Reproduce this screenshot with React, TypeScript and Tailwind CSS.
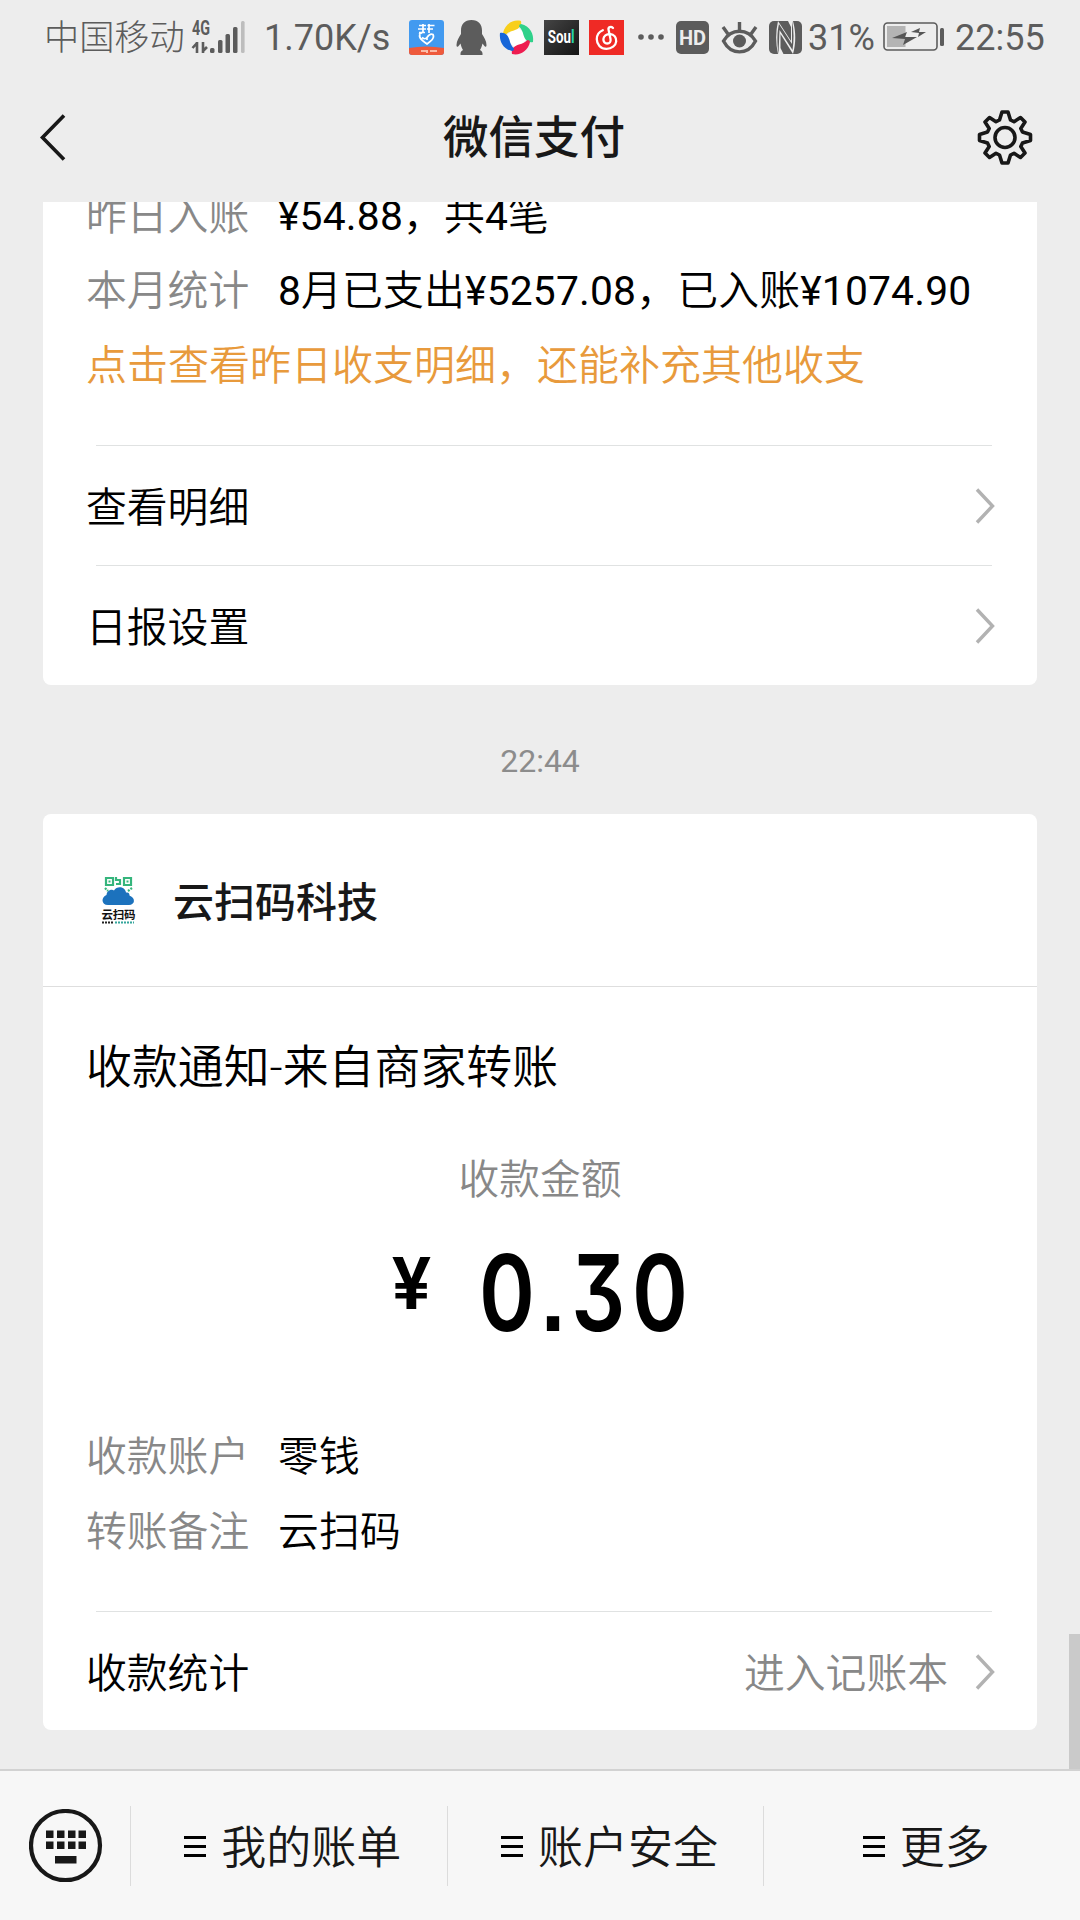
import type { ReactNode } from "react"

interface DetailRowProps {
  label: string
  value: string
}

function DetailRow({ label, value }: DetailRowProps) {
  // amounts are set a little heavier than the surrounding text
  const parts = value.split(/([¥\d.]+)/).filter(Boolean)

  return (
    <div className="flex h-[75px] items-center whitespace-nowrap text-[40.8px] leading-[60px]">
      <span className="w-[192px] text-[#888888]">{label}</span>
      <span className="tracking-[0.18px]">
        {parts.map((part, i) => (
          <span key={i} className={/\d/.test(part) ? "font-normal" : ""}>{part}</span>
        ))}
      </span>
    </div>
  )
}

function Chevron() {
  return (
    <svg className="h-[38px] w-[22px]" viewBox="0 0 22 38" fill="none" stroke="#b2b2b2" strokeWidth="3.4">
      <path d="M3 2.5 18.5 19 3 35.5" />
    </svg>
  )
}

interface LinkRowProps {
  label: string
  extra?: string
}

function LinkRow({ label, extra }: LinkRowProps) {
  return (
    <div className="mr-[41px] ml-[43px]">
      <div className="mr-[4px] ml-[10px] h-px bg-[#e0e2e2]" />
      <div className="flex h-[119px] items-center text-[40.8px] leading-[60px]">
        <span className="flex-1 pt-[4px]">{label}</span>
        {extra && <span className="mr-[26px] pt-[4px] text-[#888888]">{extra}</span>}
        <Chevron />
      </div>
    </div>
  )
}

function SignalIcon() {
  return (
    <svg className="h-[34px] w-[53px] overflow-visible" viewBox="0 0 53 34" fill="#5c5c5c">
      <text x="0" y="15" fontSize="20" fontWeight="700" fontFamily="Roboto" textLength="18" lengthAdjust="spacingAndGlyphs">4G</text>
      <path d="M5 22v11M0.500 28l4.500-5M11 22v11M11 31l4-4" stroke="#5c5c5c" strokeWidth="2.6" />
      <rect x="18" y="28" width="4.500" height="5" rx="1.500" />
      <rect x="26" y="20" width="4.500" height="13" rx="1.500" />
      <rect x="33.500" y="14" width="4.500" height="19" rx="1.500" />
      <rect x="41" y="7" width="4.500" height="26" rx="1.500" />
      <rect x="49" y="1" width="3.600" height="32" rx="1.500" fill="#bdbdbd" />
    </svg>
  )
}

function HelperAppIcon() {
  return (
    <svg className="size-[35px]" viewBox="0 0 35 35">
      <rect width="35" height="35" rx="3" fill="#429af0" />
      <path d="M0 28Q17 25 35 28V32a3 3 0 0 1-3 3H3a3 3 0 0 1-3-3Z" fill="#ee5a3c" />
      <path
        d="M10 5.500h7M9 9h8M10 12.500h6M14 4v8l-4 2.500M18.500 5.500h7M18 9h6M20 4v9M11 14.500c-2 3.500 3 6.500 7 9.500 4-3 8-6 6-9.500-2-1-4 0-6 3-2 2-3 1.500-5 0M18 17v3"
        fill="none"
        stroke="#fff"
        strokeWidth="1.700"
      />
      <path d="M12 31h5M18 30v3M21 31h7" stroke="#ffd9c8" strokeWidth="1.600" />
    </svg>
  )
}

function PenguinIcon() {
  return (
    <svg className="h-[35px] w-[31px]" viewBox="0 0 31 35" fill="#5c5c5c">
      <path d="M15.500 0C8.500 0 5 4.500 5 10.500v3.500C3 17 .5 21 .5 25c0 2 1 2.500 2.500.5l1.500-2c.6 3 1.500 5 2.500 6.500-1.500.8-2.500 2-2.500 3.500V35h22v-1.500c0-1.500-1-2.700-2.500-3.500 1-1.500 1.900-3.500 2.500-6.500l1.500 2c1.500 2 2.500 1.500 2.500-.5 0-4-2.500-8-4.500-11v-3.500C26 4.500 22.500 0 15.500 0Z" />
    </svg>
  )
}

// four coloured blades turning round a white centre
function SwirlIcon() {
  return (
    <svg className="size-[35px]" viewBox="0 0 35 35">
      <path d="M17 9 26 17 18 26 9 18Z" fill="#fff" stroke="#fff" strokeWidth="5" strokeLinejoin="round" />
      <path d="M4 13C6 4 14-1 22 1c1 5-2 8-7 9.500-4 1-6 2-8.500 4.500Q4 15 4 13Z" fill="#f8cf1c" />
      <path d="M22 4c9 2 13 10 12 18-5 1-8-2-9.500-7-1-4-2-6-4.500-8.500Q20 4 22 4Z" fill="#2fd18a" />
      <path d="M31 22c-2 9-10 14-18 12-1-5 2-8 7-9.500 4-1 6-2 8.500-4.500Q31 20 31 22Z" fill="#ee1d50" />
      <path d="M13 31C4 29 0 21 1 13c5-1 8 2 9.500 7 1 4 2 6 4.500 8.500Q15 31 13 31Z" fill="#1766d8" />
    </svg>
  )
}

function SoulIcon() {
  return (
    <div className="flex size-[35px] items-center justify-center bg-linear-to-br from-[#454545] to-[#151515]">
      <span className="origin-center scale-x-[0.74] text-[18px] leading-[22px] font-bold text-white">
        Sou<span className="text-[#27d3a8]">l</span>
      </span>
    </div>
  )
}

function MusicIcon() {
  return (
    <svg className="size-[35px]" viewBox="0 0 35 35">
      <rect width="35" height="35" fill="#ef2a25" />
      <path
        d="M24 8c-2-2-5-1-4.500 1.500L21.500 19c.6 3-1 4.500-3.300 4.500-2.400 0-4-2-3.800-4.500.3-3 3-5 6.500-5 4.500.3 6.500 4 6.300 7.500-.4 4-4.500 7.300-9.700 7.300-6 0-9.700-4.500-9.700-9.500 0-4 2.500-7.600 6-9"
        fill="none"
        stroke="#fff"
        strokeWidth="2.300"
        strokeLinecap="round"
      />
    </svg>
  )
}

function EyeIcon() {
  return (
    <svg className="h-[33px] w-[37px]" viewBox="0 0 37 33" fill="none" stroke="#5c5c5c" strokeWidth="3.400">
      <path d="M2.500 20C10 7 27 7 34.500 20 27 34.500 10 34.500 2.500 20Z" />
      <path d="M18.500 1v9M2 6l5 7M35 6l-5 7" />
      <circle cx="18.500" cy="20" r="6.500" fill="#5c5c5c" stroke="none" />
    </svg>
  )
}

function NfcIcon() {
  return (
    <svg className="size-[33px]" viewBox="0 0 33 33">
      <rect width="33" height="33" rx="5" fill="#5c5c5c" />
      <path d="M9 33C6.500 22 6.500 11 9 0l13 20V6L19 0h5c3 11 3 22 0 33L11.500 13v14l3 6Z" fill="#ededed" />
      <path d="M9.500 33C8 22 8 11 10 3l13 20V0c2 10 2 20 .5 29L10.500 9Z" fill="#5c5c5c" />
    </svg>
  )
}

function BatteryIcon() {
  return (
    <svg className="h-[30px] w-[62px]" viewBox="0 0 62 30">
      <rect x="1" y="1" width="53" height="27" rx="3.500" fill="none" stroke="#5c5c5c" strokeWidth="1.600" />
      <rect x="4" y="4" width="18.500" height="21" fill="#b4b4b4" />
      <path d="m9 16 15-6-2 5h12l-14 8 2-6Z" fill="#555" />
      <path d="m28 10 9-4-1 4h7l-8 5 1-4Z" fill="#555" />
      <rect x="57" y="6" width="4" height="18" rx="1.500" fill="#5c5c5c" />
    </svg>
  )
}

function StatusBar() {
  return (
    <div className="flex h-[74px] items-center whitespace-nowrap pl-[44px] text-[36px] leading-[44px] font-light text-[#5c5c5c]">
      <span className="w-[148px] pt-[2px] text-[35.200px]">中国移动</span>
      <SignalIcon />
      <span className="ml-[19px] w-[145px] pt-[2px] font-normal">1.70K/s</span>
      <div className="flex items-center">
        <HelperAppIcon />
        <div className="ml-[12px]"><PenguinIcon /></div>
        <div className="ml-[12px]"><SwirlIcon /></div>
        <div className="ml-[10px]"><SoulIcon /></div>
        <div className="ml-[10px]"><MusicIcon /></div>
      </div>
      <svg className="ml-[14px] h-[6px] w-[26px]" viewBox="0 0 26 6" fill="#5c5c5c">
        <circle cx="3" cy="3" r="2.800" />
        <circle cx="13" cy="3" r="2.800" />
        <circle cx="23" cy="3" r="2.800" />
      </svg>
      <span className="ml-[12px] flex size-[33px] items-center justify-center rounded-[5px] bg-[#5c5c5c] pt-px text-[20px] font-bold text-[#ededed]">HD</span>
      <div className="ml-[12px]"><EyeIcon /></div>
      <div className="ml-[11px]"><NfcIcon /></div>
      <span className="ml-[6px] w-[75px] pt-[2px] font-normal">31%</span>
      <BatteryIcon />
      <span className="ml-[10px] pt-[2px] font-normal">22:55</span>
    </div>
  )
}

function GearIcon() {
  return (
    <svg className="size-[58px]" viewBox="-29 -28.500 58 58" fill="none" stroke="#181818" strokeWidth="3.600" strokeLinejoin="round">
      <path d="M-3 -25.500H3L5.500 -17.500 9 -15.800 15.500 -20 20 -15.500 15.800 -9 17.500 -5.500 25.500 -3V3L17.500 5.500 15.800 9 20 15.500 15.500 20 9 15.800 5.500 17.500 3 25.500H-3L-5.500 17.500 -9 15.800 -15.500 20 -20 15.500 -15.800 9 -17.500 5.500 -25.500 3V-3L-17.500 -5.500 -15.800 -9 -20 -15.500 -15.500 -20 -9 -15.800 -5.500 -17.500Z" />
      <circle r="10" />
    </svg>
  )
}

function NavBar() {
  return (
    <div className="flex h-[128px] items-center justify-between pr-[46px] pl-[38px]">
      <svg className="h-[50px] w-[54px]" viewBox="0 0 54 50" fill="none" stroke="#181818" strokeWidth="3.600">
        <path d="M26 2.500 4.500 24.500 26 46.500" />
      </svg>
      <h1 className="pt-[3px] text-[45.500px] font-medium text-[#181818]">微信支付</h1>
      <GearIcon />
    </div>
  )
}

function MerchantLogo() {
  return (
    <svg className="h-[50px] w-[36px]" viewBox="0 0 36 50">
      <g fill="none" stroke="#35b57c" strokeWidth="2.200">
        <path d="M5 3h7v7H5zM23 3h7v7h-7zM15 2v3h4v4h-4" />
        <path d="M7.500 6.500h2M25.500 6.500h2" />
        <path d="M4 13l3 3M31 13l-4 3" strokeDasharray="2 1" />
      </g>
      <path d="M7 30C0 30 0 22 5.500 20 6 15 11 14 13 15.500c3-5 11-4 12 2 3-.5 3.500 1 3.500 3C35 23 34 30 28 30Z" fill="#1c72bd" />
      <text x="0.500" y="43.500" fontSize="11.500" fontWeight="700" fill="#111" textLength="34" fontFamily="Noto Sans CJK SC">云扫码</text>
      <path d="M1 47.500h12" stroke="#222" strokeWidth="2" strokeDasharray="2 1" />
      <path d="M14 47.500h19" stroke="#35a59c" strokeWidth="2" strokeDasharray="2 1" />
    </svg>
  )
}

function KeyboardIcon() {
  return (
    <svg className="size-[74px]" viewBox="0 0 74 74" fill="#181818">
      <circle cx="36.500" cy="36.500" r="34.500" fill="none" stroke="#181818" strokeWidth="4.200" />
      {[17, 28, 39, 49.5].map((x) => (
        <g key={x}>
          <rect x={x} y="21.500" width="7.500" height="7.500" />
          <rect x={x} y="32.500" width="7.500" height="7.500" />
        </g>
      ))}
      <rect x="26" y="47" width="21.500" height="7.500" />
    </svg>
  )
}

function MenuItem({ children }: { children: ReactNode }) {
  return (
    <div className="flex flex-1 items-center justify-center pl-[8px] text-[45px] text-[#181818]">
      <svg className="mr-[15px] h-[22px] w-[22px]" viewBox="0 0 22 22" stroke="#000" strokeWidth="3">
        <path d="M0 2.500h22M0 11.500h22M0 20.500h22" />
      </svg>
      <span className="pt-[7px]">{children}</span>
    </div>
  )
}

export default function App() {
  return (
    <div className="flex h-[1920px] w-[1080px] flex-col overflow-hidden bg-[#ededed] font-['Roboto','Noto_Sans_CJK_SC',sans-serif] font-[350] text-black">
      <StatusBar />
      <NavBar />

      <main className="relative h-[1567px] overflow-hidden pr-[43px] pl-[43px]">
        <section className="flex h-[483px] flex-col justify-end rounded-b-[8px] bg-white">
          <div className="mb-[42px] ml-[43px]">
            <DetailRow label="昨日入账" value="¥54.88，共4笔" />
            <DetailRow label="本月统计" value="8月已支出¥5257.08，已入账¥1074.90" />
            <div className="flex h-[75px] items-center whitespace-nowrap pt-px text-[41px] leading-[60px] text-[#e89a3c]">
              点击查看昨日收支明细，还能补充其他收支
            </div>
          </div>
          <LinkRow label="查看明细" />
          <LinkRow label="日报设置" />
        </section>

        <div className="flex h-[129px] items-center justify-center pt-[23px] text-[32px] font-normal text-[#8c8c8c]">22:44</div>

        <section className="h-[916px] rounded-[8px] bg-white">
          <div className="flex h-[173px] items-center border-b border-[#dedede] pl-[58px]">
            <MerchantLogo />
            <span className="ml-[36px] pt-[7px] text-[41px] font-medium text-[#181818]">云扫码科技</span>
          </div>
          <div className="h-[165px] pt-[46px] pl-[43px] text-[45.900px] leading-[68px]">收款通知-来自商家转账</div>
          <div className="text-center text-[40.700px] leading-[56px] text-[#888888]">收款金额</div>
          <div className="flex h-[211px] pl-[349px]">
            <span className="mt-[31px] w-[87px] text-[73px] leading-[90px] font-semibold">¥</span>
            <span className="mt-[20px] origin-left scale-x-[0.8] font-['Inter'] text-[106px] leading-[130px] font-semibold tracking-[8.500px] [font-feature-settings:'cv09','ss07']">
              0.30
            </span>
          </div>
          <div className="mb-[42px] ml-[43px]">
            <DetailRow label="收款账户" value="零钱" />
            <DetailRow label="转账备注" value="云扫码" />
          </div>
          <LinkRow label="收款统计" extra="进入记账本" />
        </section>

        <div className="absolute right-0 bottom-0 h-[135px] w-[11px] bg-[#cacaca]" />
      </main>

      <footer className="flex h-[151px] items-center border-t-2 border-[#d2d2d2] bg-[#f7f7f7]">
        <div className="flex w-[130px] pl-[29px]">
          <KeyboardIcon />
        </div>
        <div className="flex h-[80px] flex-1 divide-x divide-[#dcdcdc] border-l border-[#dcdcdc]">
          <MenuItem>我的账单</MenuItem>
          <MenuItem>账户安全</MenuItem>
          <MenuItem>更多</MenuItem>
        </div>
      </footer>
    </div>
  )
}
